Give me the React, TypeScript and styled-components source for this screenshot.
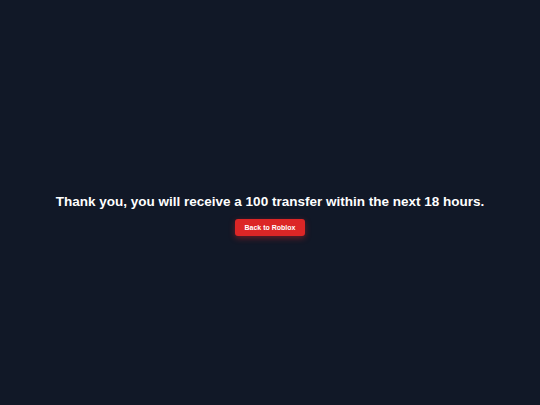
import React from "react";
import styled, { createGlobalStyle } from "styled-components";

const GlobalStyle = createGlobalStyle`
  html, body {
    margin: 0;
    padding: 0;
    background-color: #111827;
  }
  #root {
    min-height: 100vh;
  }
`;

const Page = styled.div`
  min-height: 405px;
  display: flex;
  flex-direction: column;
  align-items: center;
  justify-content: center;
  padding-top: 23px;
  box-sizing: border-box;
  font-family: "Liberation Sans", Arial, sans-serif;
`;

const Message = styled.h1`
  margin: 0 0 8px 0;
  font-size: 13.5px;
  font-weight: 700;
  line-height: 18px;
  color: #ffffff;
  text-align: center;
`;

const BackButton = styled.button`
  font-family: "Liberation Sans", Arial, sans-serif;
  font-size: 7px;
  font-weight: 700;
  color: #ffffff;
  background-color: #dc2626;
  border: none;
  border-radius: 3px;
  height: 17px;
  padding: 0 10px;
  cursor: pointer;
  box-shadow: 0 2px 6px rgba(220, 38, 38, 0.45);
`;

const App: React.FC = () => {
  return (
    <>
      <GlobalStyle />
      <Page>
        <Message>
          Thank you, you will receive a 100 transfer within the next 18 hours.
        </Message>
        <BackButton>Back to Roblox</BackButton>
      </Page>
    </>
  );
};

export default App;
